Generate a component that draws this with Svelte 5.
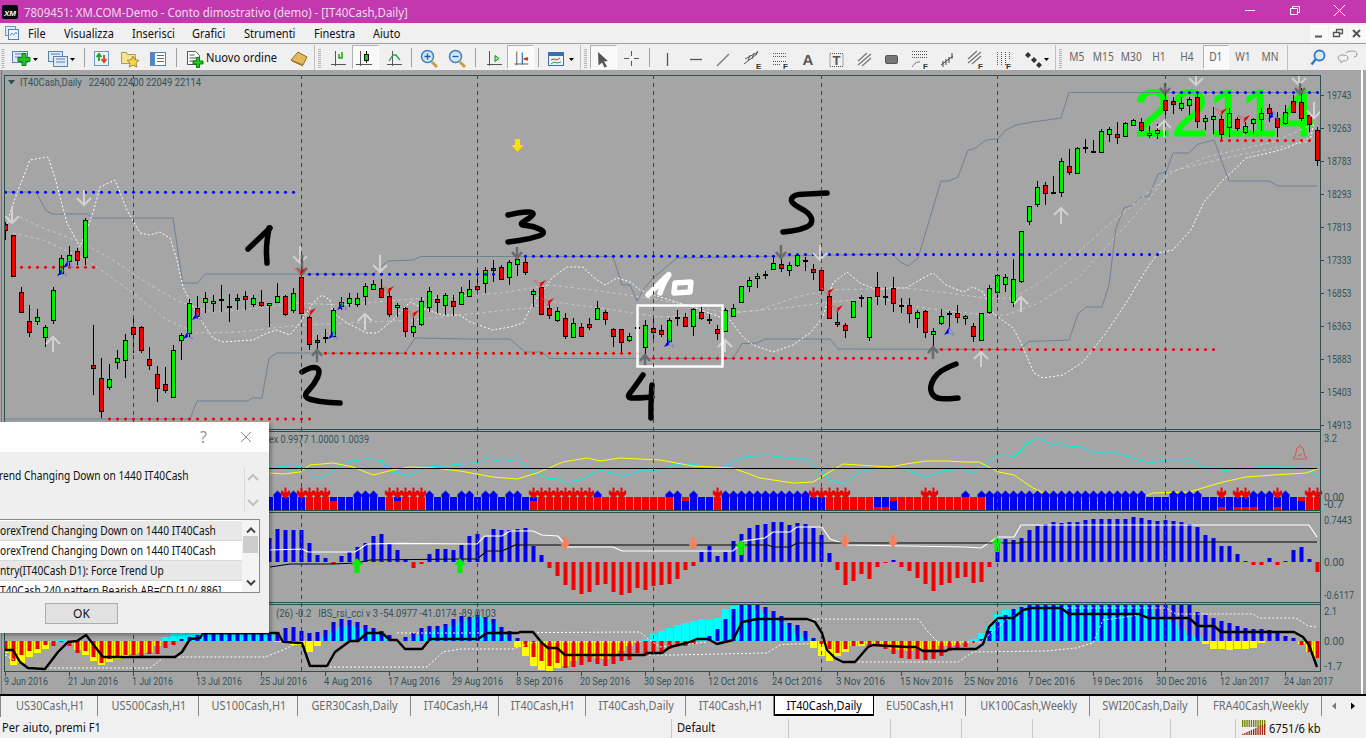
<script>
  const cx = i => 5.5 + 8 * i;

  // [colour, body top, body bottom, wick top, wick bottom], in 3x crop units per section
  const sec0 = [['r',132,150,125,180],['r',166,288,166,290],['r',337,397,322,398],['r',422,457,376,470],['g',412,424,387,435],['g',442,472,435,500],['g',331,421,320,432],['g',235,278,224,280],['g',226,244,198,262],['r',214,241,205,255],
    ['g',120,232,114,255],['r',556,565,435,645],['r',595,694,535,715],['g',598,622,552,630],['g',535,547,510,566],['g',481,541,462,594],['r',442,463,418,518],['r',442,511,437,518],['r',538,556,502,570],['r',583,625,558,666],
    ['r',613,631,560,640],['g',511,650,495,655],['g',466,481,460,540],['g',370,460,358,470],['r',385,409,348,418],['g',355,367,337,398],['g',362,370,345,395],['d',356,356,316,395],['d',377,377,342,425],['r',355,361,342,390],
    ['r',347,358,333,390],['g',355,373,345,380],['r',365,376,330,380],['g',370,376,370,440],['g',347,367,310,370],['r',347,403,345,408],['g',340,390,325,400],['r',292,400,260,402],['r',412,493,405,510],['r',481,487,466,508],
    ['d',470,470,448,490],['g',391,469,385,472],['g',367,379,350,390],['g',355,370,338,382],['g',355,373,338,382],['g',319,348,310,375],['g',313,328,300,330],['r',325,352,298,355],['r',349,403,325,410],['g',376,382,368,410],
    ['r',385,454,380,472],['g',439,457,415,470],['g',364,431,350,437],['g',334,382,320,395],['r',358,367,345,398],['g',346,376,340,405],['r',364,379,345,408]];
  const sec1 = [['g',367,403,350,405],['g',358,379,330,382],['r',349,358,290,375],['g',301,340,290,368],['r',295,301,270,335],['r',292,328,285,330],['g',277,322,270,345],['g',268,283,258,318],['r',277,307,262,315],['g',364,373,358,410],
    ['r',352,433,350,436],['r',415,436,392,448],['g',424,451,412,455],['r',445,498,430,508],['g',460,502,445,503],['r',472,499,458,502],['r',463,472,445,480],['g',415,448,393,450],['r',427,448,420,465],['r',478,499,475,530],
    ['r',478,517,478,550],['g',499,511,490,515],['d',470,470,460,480],['g',466,532,450,590],['r',475,487,448,512],['r',481,493,465,500],['g',451,514,445,520],['d',442,442,420,468],['r',442,469,428,472],['g',418,469,413,498],
    ['r',427,445,410,450],['d',448,448,432,462],['r',478,490,465,510],['g',421,484,415,487],['g',415,439,403,440],['g',349,397,349,398],['g',331,349,322,365],['g',319,325,310,355],['d',313,313,302,327],['g',280,298,262,300],
    ['r',283,295,250,305],['g',286,301,277,318],['g',256,286,253,290],['d',271,271,262,302],['r',298,307,283,330],['r',301,361,290,365],['r',379,445,360,448],['r',457,463,425,470],['r',466,481,460,505],['g',394,442,392,444],
    ['d',382,382,375,410],['g',382,502,380,512],['r',352,379,306,405],['d',377,377,352,405],['r',355,400,322,425],['d',404,404,385,430],['r',406,430,385,458],['g',427,445,420,475],['r',424,487,420,503],['g',484,493,475,565],
    ['g',439,460,418,464],['d',430,430,424,478],['r',430,442,405,458],['g',439,445,435,465],['r',469,499,460,515],['g',430,509,428,512],['g',355,427,345,432],['g',316,367,312,385],['g',322,343,312,367],['g',328,397,268,412],
    ['g',184,334,184,340],['g',109,154,109,166],['g',52,103,34,112],['r',46,70,36,104],['d',65,65,18,68]];
  const sec2 = [['g',484,577,475,590],['r',499,517,447,525],['g',445,518,440,520],['d',440,440,418,460],['d',452,452,420,460],['g',394,455,388,458],['g',388,403,380,425],['r',403,412,365,432],['g',370,409,365,410],['g',361,376,358,378],
    ['r',367,391,353,395],['g',400,406,378,413],['g',391,400,372,416],['r',301,331,280,345],['r',304,313,292,342],['g',310,325,290,332],['g',298,316,292,345],['r',292,364,280,385],['g',355,364,345,390],['g',349,358,320,402],
    ['r',358,403,345,420],['g',340,382,325,410],['r',358,385,352,392],['g',379,397,365,402],['g',358,370,355,402],['g',340,358,325,393],['r',325,340,312,365],['r',355,382,335,410],['g',337,370,315,375],['r',304,337,285,340],
    ['r',307,355,265,362],['r',346,373,340,395],['r',391,481,382,497]];
  const snap = v => Math.round(v) + 0.5;
  const toCandle = base => r => ({ c: r[0], t: snap(base + r[1] / 3), b: snap(base + r[2] / 3), h: Math.round(base + r[3] / 3), l: Math.round(base + r[4] / 3) });
  const candles = [...sec0.map(toCandle(180)), ...sec1.map(toCandle(170)), ...sec2.map(toCandle(0))].map((k, i) => ({ ...k, x: cx(i) }));

  const upper = "5,192 36,192 46,210.5 52,214 87,214 93,218 173,218 182,278 182,283 198,283 205,274 373,274 388,261 413,260 421,256.5 613,256.5 622,285 630,285 637,301 643,290 653,278 677,258 893,254 900,262 908,266 918,258 941,181 949,181 958,177 968,150 974,149 986,140 998,139 1006,130 1016,125 1033,122 1061,118 1069,92.5 1316,92.5";
  const lower = "5,419 190,419 197,401 248,401 252,398 262,398 269,358 277,353 405,353 415,338 468,339 510,339 525,352 542,352 550,358.5 733,358.5 742,343.5 757,343 765,339 830,339 838,349 1019,349.5 1029,341.5 1069,340 1078,314 1086,307 1102,307 1109,285 1116,228 1124,208 1133,205 1141,197 1149,196 1158,174 1166,172 1173,153 1189,153 1198,144 1214,140 1229,181 1269,181 1278,186 1317,186";
  const bollTop = "5,235 10,213 17,193 30,160 48,157 55,178 67,223 80,247 93,213 100,187 115,180 127,210 140,233 150,235 160,232 170,238 177,260 183,287 193,307 203,323 213,338 223,342 253,340 267,333 277,330 290,335 302,320 313,303 322,295 330,300 333,313 347,323 367,333 377,333 393,320 410,302 427,310 443,315 460,315 470,322 493,330 510,327 523,323 533,303 553,277 567,267 583,267 593,277 605,285 617,278 630,282 640,290 660,297 693,307 720,317 730,320 743,337 753,345 773,352 793,345 810,333 823,317 833,283 847,272 860,283 877,290 890,288 906,288 923,278 933,273 946,285 963,292 973,287 983,292 993,313 1013,328 1021,343 1034,373 1043,378 1063,375 1083,362 1106,333 1126,303 1146,270 1158,253 1173,250 1191,230 1204,202 1223,180 1234,170 1246,158 1259,155 1273,152 1289,147 1311,137 1314,122";
  const mid1 = "20,217 43,228 83,243 113,260 150,285 180,302 213,312 240,310 300,303 340,305 400,300 460,296 500,293 550,285 593,290 660,300 727,313 760,310 793,298 827,290 906,288 939,292 986,298 1013,298 1039,283 1073,257 1106,227 1139,200 1173,172 1206,157 1273,142 1316,123";
  const mid2 = "13,233 43,240 87,260 133,293 167,320 197,333 240,332 300,325 350,323 413,320 460,315 527,308 553,302 593,307 660,317 743,312 793,307 827,302 880,298 906,305 939,310 986,315 1006,315 1039,303 1079,277 1119,233 1146,203 1169,172 1196,165 1239,155 1316,140";

  const dots = (x0, x1, y, col) => { const o = []; for (let x = x0; x <= x1; x += 8) o.push({ x: x + 0.5, y, col }); return o; };
  const blue = '#0000f0', red = '#f00000';
  const levelDots = [...dots(5,293,192.3,blue),...dots(309,493,274.3,blue),...dots(525,773,256.3,blue),...dots(789,1157,254.5,blue),...dots(1165,1317,92.5,blue),
    ...dots(13,93,267.3,red),...dots(109,309,419,red),...dots(325,637,353.3,red),...dots(653,925,358.3,red),...dots(933,1213,349.5,red),...dots(1221,1309,140.5,red)];

  const lightDown = [[12,207,223],[84,190,205],[300,246,263],[380,255,272],[820,245,260],[1196,72,85],[1299,72,85],[1314,102,118]];
  const darkDown = [[302,255,274],[517,247,258],[781,245,258],[1165,83,94],[1300,83,94]];
  const lightUp = [[53,337,352],[365,314,330],[725,340,352],[1061,208,224],[1021,297,312],[981,352,367],[1164,121,137]];
  const darkUp = [[317,350,362],[645,355,365],[933,347,359]];
  const blueHeads = [[62,274],[68,266],[197,318],[188,337],[333,337],[342,308],[669,345],[949,333],[1273,117]];
  const redHeads = [[310,313],[388,291],[413,315],[300,273],[540,285],[548,303],[828,293],[837,310],[1221,113],[1244,120]];

  // hand-drawn annotations: point lists rounded into a pen stroke
  const smooth = s => {
    const p = s.split(' ').map(q => q.split(',').map(Number));
    let d = `M${p[0][0]} ${p[0][1]}`;
    for (let i = 1; i < p.length - 1; i++) d += `Q${p[i][0]} ${p[i][1]} ${(p[i][0] + p[i + 1][0]) / 2} ${(p[i][1] + p[i + 1][1]) / 2}`;
    const e = p[p.length - 1];
    return d + `L${e[0]} ${e[1]}`;
  };
  const inks = [
    "248,249 270,228",
    "269,228 266,245 267,263",
    "302,372 312,366 321,370 314,385 302,397 320,402 340,403",
    "508,215 520,212 535,212 530,218 518,225 534,226 547,233 530,239 508,242",
    "643,375 634,388 626,398 640,398 652,397",
    "652,385 651,400 651,418",
    "827,193 805,194 793,195 790,203 810,213 813,224 800,230 783,232",
    "956,364 939,370 929,387 934,398 947,399 958,398"
  ].map(smooth);

  const barKind = {}, marks = {};
  const fill = (t, a, b, m) => { for (let i = a; i <= b; i++) t[i] = m; };
  [[34,34,'^'],[35,35,'v'],[36,36,'^'],[37,40,'v'],[44,46,'^'],[48,52,'v'],[53,53,'^'],[55,55,'^'],[57,58,'^'],[60,61,'^'],[63,64,'^'],[66,73,'v'],[74,74,'^'],[76,77,'v'],[83,84,'^'],[86,86,'^'],[89,89,'v'],[90,100,'^'],[101,105,'v'],[115,116,'v'],[120,120,'^'],[122,142,'^'],[146,149,'^'],[152,152,'v'],[154,155,'v'],[156,158,'^'],[159,159,'v'],[160,160,'^'],[163,164,'v']].forEach(r => fill(marks, ...r));
  [[33,37,'b'],[38,40,'r'],[41,41,'t'],[42,47,'b'],[48,48,'r'],[49,49,'t'],[50,52,'r'],[53,65,'b'],[66,66,'t'],[67,83,'r'],[84,84,'b'],[85,85,'u'],[86,88,'b'],[89,89,'r'],[90,102,'b'],[103,108,'r'],[109,110,'m'],[111,111,'u'],[112,122,'r'],[123,151,'b'],[152,152,'m'],[153,153,'b'],[154,156,'m'],[157,158,'b'],[159,159,'m'],[160,161,'b'],[162,162,'u'],[163,164,'r']].forEach(r => fill(barKind, ...r));
  const pane2 = []; for (let i = 33; i <= 164; i++) pane2.push({ x: cx(i), k: barKind[i], m: marks[i] });

  const cyan = "270,465 283,467 293,465 303,468 312,477 323,478 333,470 347,462 367,459 380,460 392,472 410,476 427,467 445,466 460,464 477,463 487,459 495,460 502,462 518,459 533,472 547,478 558,479 567,482 580,480 600,470 623,476 643,470 660,470 673,465 693,464 717,470 733,463 743,457 767,455 793,459 807,459 820,470 830,480 843,484 863,470 893,469 906,470 926,477 943,471 963,469 973,473 983,467 996,456 1006,455 1014,457 1029,442 1038,438 1053,445 1061,443 1069,447 1079,446 1094,452 1109,452 1126,456 1149,463 1166,460 1189,459 1203,467 1219,468 1223,471 1234,469 1259,467 1289,467 1306,468 1317,477";
  const yellow = "270,473 283,474 300,472 310,465 333,463 353,467 373,475 393,470 410,467 433,468 460,471 493,477 517,479 537,473 563,462 587,458 600,461 620,458 660,460 693,466 733,468 760,478 793,483 813,482 843,464 890,467 906,464 926,461 946,461 966,462 979,462 999,472 1014,475 1033,488 1059,500 1083,503 1109,503 1136,500 1153,493 1189,492 1223,482 1246,477 1273,475 1306,473 1317,469";

  const osc = [24,33,32,32,32,19,7,4,-2,6,10,15,19,26,28,19,12,3,-6,-2,8,13,13,12,17,26,28,25,33,32,32,33,34,16,7,-6,-14,-23,-28,-32,-30,-23,-22,-30,-33,-31,-26,-28,-24,-23,-22,-17,-8,-4,10,16,6,10,21,28,34,37,38,40,40,37,39,38,34,27,9,-8,-23,-19,-12,-17,-5,-1,2,-5,-9,-16,-22,-29,-23,-21,-16,-15,-21,-20,-5,20,23,22,24,32,36,38,40,39,40,40,42,43,43,43,43,43,45,44,42,41,42,41,40,38,35,27,24,16,16,8,1,-3,-3,4,-3,1,12,15,3,-10]
    .map((v, k) => ({ x: cx(33 + k), v }));
  const oscWhite = "270,550 302,549 308,552 355,552 367,544 400,543.3 477,544 485,536 502,536 510,531 533,531 542,535 558,536 567,547 613,547 622,551 733,551 743,541 765,538 773,532 790,532 797,527 822,527 830,539 848,545 966,547 981,548 998,537 1014,537 1021,525 1309,525 1317,537";
  const oscBlack = "270,567 290,564 333,564 357,563 370,560 460,559 477,559 487,551 502,551 515,545 768,545 773,547 790,547 797,543 1019,543 1021,542 1317,542";
  const greenUps = [[357,558],[460,558],[741,540],[997,537]];
  const orangeDowns = [[565,537],[693,537],[845,535],[893,535]];

  const wideV = [-12,-24,-22,-16,-12,-8,-1,1,-3,-9,-14,-20,-24,-21,-18,-15,-13,-12,-11,-5,4,8,8,8,10,10,10,10,10,10,10,10,10,10,-1,-3,-4,-4,-11,-5,4,10,14,16,14,12,10,6,2,0,0,3,6,10,12,14,16,20,22,25,22,18,9,2,-6,-15,-25,-29,-30,-27,-25,-20,-16,-14,-17,-18,-15,-10,-5,-1,2,7,10,13,16,18,20,22,21,23,32,35,36,36,32,28,24,19,16,8,4,-7,-15,-20,-15,-11,-5,-5,-3,-4,-5,-8,-9,-10,-8,-8,-8,-5,-5,-4,-1,2,8,15,27,31,32,34,37,37,37,37,37,37,37,37,37,37,37,37,37,37,37,37,25,21,19,12,6,4,-3,-8,-8,-9,-8,-8,-7,-2,0,0,0,0,-3,-11,-17,-17];
  const thinV = [-10,-20,-14,-10,-8,-4,-5,-1,-5,-12,-10,-16,-22,-18,-15,-14,-14,-15,-13,-13,-7,-4,2,4,6,7,7,7,8,8,8,8,8,8,9,13,14,10,8,9,11,19,22,21,19,16,13,10,6,0,4,8,13,15,15,17,22,25,24,26,24,22,14,10,3,-6,-16,-20,-25,-22,-27,-26,-24,-21,-23,-25,-23,-20,-19,-12,-15,-13,-11,-8,-4,-5,-3,0,5,12,22,32,36,36,36,34,30,25,18,16,10,3,-3,-8,-12,-8,-5,-3,-6,-4,-8,-13,-17,-18,-18,-19,-18,-15,-10,-8,-6,-2,2,10,19,26,32,34,37,37,37,37,37,37,37,37,37,37,37,37,37,37,37,37,37,37,37,37,37,29,26,23,20,18,15,13,12,12,11,9,5,3,-4,-11,-17,-19];
  const ibs = wideV.map((c, i) => ({ x: cx(i), c, t: thinV[i] ?? 0 }));
  const ibsBlack = "5,650 13,650 20,662 28,668 45,669 58,652 68,642 77,641 86,635 103,657 175,657 182,652 190,639 200,638 203,633 278,633 283,642 302,643 310,666 327,666 335,652 350,641 358,641 367,633 382,633 390,640 397,640 405,649 422,649 430,639 478,639 487,633 518,633 520,632 533,632 542,643 548,648 557,648 565,655 645,655 647,653 662,653 670,647 687,643 697,639 708,639 717,644 733,640 742,622 757,619 807,619 815,622 822,633 827,650 835,658 843,662 855,662 868,647 873,645 907,647 916,647 923,651 946,651 949,649 976,649 983,644 989,627 998,618 1013,618 1023,610 1031,608 1061,608 1069,614 1139,614 1148,618 1189,618 1198,626 1214,626 1221,632 1294,632 1303,637 1309,645 1317,667";
  const ibsDots = [
    "5,655 30,668 150,668 163,658 177,657 265,657 283,650 300,642",
    "310,667 427,667 443,652 460,649 513,649 530,643 540,642 640,642",
    "565,655 673,655 767,653 780,645 793,644 815,644 842,661 857,662 958,662 973,652 1046,651 1076,648 1093,643 1103,620 1119,618 1139,615",
    "397,633 460,633 640,632 647,638 660,647 707,642",
    "813,619 918,619 929,633 938,642 981,642 1006,620 1029,608 1166,608 1176,614 1253,614 1259,618 1296,618 1308,626 1317,627"
  ];

  const seps = [133.5, 301.5, 477.5, 653.5, 821.5, 997.5, 1165.5];
  const prices = [[19743,95],[19263,128],[18783,161],[18293,194],[17813,227],[17333,260],[16853,293],[16363,326],[15883,359],[15403,392],[14913,425]];
  const paneLabels = [['3.2',438,13],['0.00',497,20],['-0.7',504,19],['0.7443',520,28],['0.00',562,20],['-0.6117',595,30],['2.1',611,13],['0.00',641,20],['-1.7',666,18]];
  const dates = [['9 Jun 2016',44],['21 Jun 2016',50],['1 Jul 2016',41],['13 Jul 2016',46],['25 Jul 2016',47],['4 Aug 2016',48],['17 Aug 2016',52],['29 Aug 2016',51],['8 Sep 2016',47],['20 Sep 2016',50],['30 Sep 2016',50],['12 Oct 2016',50],['24 Oct 2016',50],['3 Nov 2016',49],['15 Nov 2016',53],['25 Nov 2016',54],['7 Dec 2016',47],['19 Dec 2016',51],['30 Dec 2016',51],['12 Jan 2017',49],['24 Jan 2017',49]];

  const tabs = [['US30Cash,H1',96],['US500Cash,H1',101],['US100Cash,H1',99],['GER30Cash,Daily',113],['IT40Cash,H4',88],['IT40Cash,H1',87],['IT40Cash,Daily',100],['IT40Cash,H1',88],['IT40Cash,Daily',100,true],['EU50Cash,H1',92],['UK100Cash,Weekly',124],['SWI20Cash,Daily',108],['FRA40Cash,Weekly',124]];
  const menu = [['File',36],['Visualizza',68],['Inserisci',60],['Grafici',52],['Strumenti',70],['Finestra',59],['Aiuto',40]];
  const periods = [['M5',24],['M15',28],['M30',28],['H1',28],['H4',28]];
  const periods2 = [['W1',28],['MN',26]];
  const statusCells = [['Per aiuto, premi F1',672],['Default',117],['',102],['',71],['',71],['',67],['',71],['',65]];
  const statusBars = Array.from({ length: 11 }, (_, k) => k);
</script>

<div class="app">
  <header class="title">
    <svg class="logo" viewBox="0 0 20 20" width="20" height="20"><rect x="2" y="3" width="16" height="14" rx="2" fill="#0a0a0a"/><text x="10" y="13.5" text-anchor="middle" class="logotext">XM</text></svg>
    <span class="titletext">7809451: XM.COM-Demo - Conto dimostrativo (demo) - [IT40Cash,Daily]</span>
    <div class="winbtns">
      <svg viewBox="0 0 134 23" width="134" height="23"><path d="M13 10.5h10" stroke="#fff" fill="none"/><path d="M58.5 8.5h7v6h-7zM60.5 8.5v-2h7v6h-2" stroke="#fff" fill="none"/><path d="M102 5l11 11M113 5l-11 11" stroke="#fff" fill="none"/></svg>
    </div>
  </header>

  <nav class="menu">
    <svg class="menuicon" viewBox="0 0 16 16" width="16" height="16"><rect x="1.5" y="1.5" width="10" height="9" fill="#dcecf8" stroke="#6b9ac8"/><rect x="4.5" y="4.5" width="10" height="10" fill="#eef5fb" stroke="#5a7fa8"/><path d="M6 11l2-3 2 2 2-3 1 2" stroke="#6b9ac8" fill="none"/></svg>
    {#each menu as m}<span class="menuitem" style="width:{m[1]}px"><span class="mt">{m[0]}</span></span>{/each}
    <div class="mdibtns">
      <span class="mdi"><svg viewBox="0 0 18 17" width="18" height="17"><path d="M5 11.5h7" stroke="#555" stroke-width="2"/></svg></span>
      <span class="mdi"><svg viewBox="0 0 18 17" width="18" height="17"><path d="M4.5 7.5h6v4h-6zM7.5 7V4.5h6v4h-3" fill="none" stroke="#555" stroke-width="1.3"/></svg></span>
      <span class="mdi"><svg viewBox="0 0 18 17" width="18" height="17"><path d="M5 5l7 7M12 5l-7 7" stroke="#555" stroke-width="2"/></svg></span>
    </div>
  </nav>

  <div class="toolbar">
    <svg viewBox="0 43 10 27" width="10" height="27"><path d="M3 48v19" stroke="#b4b4b4" stroke-width="3" stroke-dasharray="1 1"/></svg>
    <svg viewBox="10 43 36 27" width="36" height="27">
      <rect x="12.5" y="50.5" width="15" height="11" fill="#dfeaf6" stroke="#5b82ad"/><path d="M15 53h9M15 56h6" stroke="#5b82ad"/>
      <path d="M20 52.500h4v4h4v4h-4v4h-4v-4h-4v-4h4z" transform="translate(2 0)" fill="#21c421" stroke="#0b7d0b"/>
      <path d="M33 57h5l-2.500 3z" fill="#000"/></svg>
    <svg viewBox="46 43 36 27" width="36" height="27">
      <rect x="48.5" y="50.500" width="14" height="10" fill="#dfeaf6" stroke="#5b82ad"/><rect x="53.500" y="55.500" width="14" height="10" fill="#dfeaf6" stroke="#5b82ad"/><path d="M51 53h9M56 58h9M56 61h9" stroke="#5b82ad"/>
      <path d="M70 57h5l-2.500 3z" fill="#000"/></svg>
    <svg viewBox="82 43 8 27" width="8" height="27"><path d="M84.500 47v19" stroke="#a0a0a0"/></svg>
    <svg viewBox="90 43 26 27" width="26" height="27">
      <rect x="94.500" y="50.500" width="14" height="14" fill="#eaf3fb" stroke="#6f97bf"/><path d="M99 60v-6M96.500 56l2.500-3 2.500 3" fill="none" stroke="#1aa51a" stroke-width="1.800"/><path d="M104 54v6M101.500 58l2.500 3 2.500-3" fill="none" stroke="#d8401a" stroke-width="1.800"/></svg>
    <svg viewBox="116 43 30 27" width="30" height="27">
      <path d="M121.500 51.500h5l1 2h8v9h-14z" fill="#f7e38d" stroke="#a89a5e"/><path d="M133 55l1.800 3.800 4.200.5-3 2.800.8 4-3.800-2-3.800 2 .8-4-3-2.800 4.200-.5z" fill="#f5d453" stroke="#a58b2a"/></svg>
    <svg viewBox="146 43 26 27" width="26" height="27">
      <rect x="150.500" y="51.500" width="15" height="13" fill="#fff" stroke="#5b82ad"/><rect x="151" y="52" width="4" height="12" fill="#4a8acc"/><path d="M157 54.500h7M157 57.500h7M157 60.500h7" stroke="#666"/></svg>
    <svg viewBox="172 43 12 27" width="12" height="27"><path d="M176.500 47v19" stroke="#a0a0a0"/></svg>
    <div class="order">
      <svg viewBox="184 43 22 27" width="22" height="27">
        <path d="M187.500 50.500h8l4 4v9h-12z" fill="#fff" stroke="#555"/><path d="M189.500 54h5M189.500 57h7M189.500 60h7" stroke="#555"/>
        <path d="M196.500 56.500h3v3.500h3.500v3h-3.500v3.500h-3v-3.500h-3.500v-3h3.500z" fill="#21c421" stroke="#0b7d0b"/></svg>
      <span class="ordertext">Nuovo ordine</span>
    </div>
    <svg viewBox="284 43 28 27" width="28" height="27"><path d="M291 59l7-8 9 5-4 8z" fill="#e5b957" stroke="#8e6c24"/><path d="M292 60l11 5" stroke="#8e6c24"/></svg>
    <svg viewBox="312 43 14 27" width="14" height="27"><path d="M314.500 44v26" stroke="#c0c0c0"/><path d="M319.500 48v19" stroke="#b4b4b4" stroke-width="3" stroke-dasharray="1 1"/></svg>

    <svg viewBox="326 43 26 27" width="26" height="27"><path d="M335.500 50v15M331 63.500h15" stroke="#555" fill="none"/><path d="M339 53v4h3v-6" fill="none" stroke="#19a319" stroke-width="1.500"/></svg>
    <span class="pressed"><svg viewBox="352 43 26 27" width="26" height="27"><path d="M360.500 50v15M356 63.500h16" stroke="#555" fill="none"/><path d="M366.500 50v12" stroke="#111"/><rect x="364.500" y="53.500" width="4" height="6" fill="#21c421" stroke="#111"/></svg></span>
    <svg viewBox="378 43 28 27" width="28" height="27"><path d="M391.500 50v15M386 63.500h15" stroke="#555" fill="none"/><path d="M388 60l4-6h3l4 5" fill="none" stroke="#2a9c55" stroke-width="1.300"/></svg>
    <svg viewBox="406 43 8 27" width="8" height="27"><path d="M410.500 47v19" stroke="#a0a0a0"/></svg>
    <svg viewBox="414 43 28 27" width="28" height="27"><path d="M431 61l5 5" stroke="#c9a13a" stroke-width="3"/><circle cx="426.500" cy="55.500" r="6" fill="#cfe4f6" stroke="#3d7fbf" stroke-width="1.500"/><path d="M423.500 55.500h6M426.500 52.500v6" stroke="#1f5fa6" stroke-width="1.300"/></svg>
    <svg viewBox="442 43 28 27" width="28" height="27"><path d="M459 61l5 5" stroke="#c9a13a" stroke-width="3"/><circle cx="454.500" cy="55.500" r="6" fill="#cfe4f6" stroke="#3d7fbf" stroke-width="1.500"/><path d="M451.500 55.500h6" stroke="#1f5fa6" stroke-width="1.300"/></svg>
    <svg viewBox="470 43 8 27" width="8" height="27"><path d="M474.500 47v19" stroke="#a0a0a0"/></svg>
    <svg viewBox="478 43 28 27" width="28" height="27"><path d="M488.500 50v15M486 63.500h15" stroke="#555" fill="none"/><path d="M494 54.500v6l4-3z" fill="#9ee89e" stroke="#0f8f0f"/></svg>
    <span class="pressed"><svg viewBox="506 43 28 27" width="26" height="27"><path d="M516.500 50v15M514 63.500h15" stroke="#555" fill="none"/><path d="M522.500 51v13" stroke="#2f6fb4" stroke-width="1.300"/><path d="M528 56.500l-4 1.500 4 1.500z M524 58h5" fill="#c83a10" stroke="#c83a10"/></svg></span>
    <svg viewBox="534 43 10 27" width="10" height="27"><path d="M538.500 47v19" stroke="#a0a0a0"/></svg>
    <svg viewBox="544 43 34 27" width="34" height="27"><rect x="548.500" y="51.500" width="15" height="13" fill="#eef4fb" stroke="#3a70a8"/><rect x="549" y="52" width="14" height="3" fill="#3a70a8"/><path d="M551 59l3-1 3 1 3-2" stroke="#b7411b" fill="none"/><path d="M551 63l3-2 3 1 4-1" stroke="#1b9a3c" fill="none"/><path d="M569 57h5l-2.500 3z" fill="#000"/></svg>
    <svg viewBox="578 43 12 27" width="12" height="27"><path d="M580.500 44v26" stroke="#c0c0c0"/><path d="M585.500 48v19" stroke="#b4b4b4" stroke-width="3" stroke-dasharray="1 1"/></svg>

    <span class="pressed"><svg viewBox="590 43 26 27" width="26" height="27"><path d="M598 51l10 9-4 .5 3 5-2.500 1-2.500-5-3.500 3z" fill="#555"/></svg></span>
    <svg viewBox="616 43 28 27" width="28" height="27"><path d="M630.500 50v5M630.500 60v5M623 57.500h5M633 57.500h5" stroke="#555"/></svg>
    <svg viewBox="644 43 8 27" width="8" height="27"><path d="M648.500 47v19" stroke="#a0a0a0"/></svg>
    <svg viewBox="652 43 28 27" width="28" height="27"><path d="M666.500 52v13" stroke="#555" stroke-width="1.300"/></svg>
    <svg viewBox="680 43 28 27" width="28" height="27"><path d="M689 58.500h12" stroke="#555" stroke-width="1.300"/></svg>
    <svg viewBox="708 43 28 27" width="28" height="27"><path d="M716 65l12-12" stroke="#777" stroke-width="1.300"/></svg>
    <svg viewBox="736 43 28 27" width="28" height="27"><path d="M743 63l13-10M744 58l13-7M747 60l2-6M751 58l2-6M755 54l2-4" stroke="#555" fill="none"/><text x="755" y="68" class="ti">E</text></svg>
    <svg viewBox="764 43 28 27" width="28" height="27"><path d="M772 52.500h13M772 55.500h13M772 60.500h13M772 63.500h8" stroke="#555" stroke-dasharray="1 1"/><text x="782" y="68" class="ti">F</text></svg>
    <svg viewBox="792 43 28 27" width="28" height="27"><text x="807" y="64" text-anchor="middle" class="ta">A</text></svg>
    <svg viewBox="820 43 30 27" width="30" height="27"><rect x="829" y="52.500" width="13" height="13" fill="none" stroke="#555" stroke-dasharray="1 1"/><text x="835.500" y="64" text-anchor="middle" class="ta t2">T</text></svg>
    <svg viewBox="850 43 28 27" width="28" height="27"><path d="M857 60l9-8M857 64l13-11M861 65l9-8" stroke="#777" stroke-width="1.300"/></svg>
    <svg viewBox="878 43 26 27" width="26" height="27"><rect x="884.500" y="54.500" width="12" height="8" rx="1.500" fill="#777" stroke="#555"/></svg>
    <svg viewBox="904 43 28 27" width="28" height="27"><path d="M911 50.500h15M911 53.500h15M911 56.500h15" stroke="#555" stroke-dasharray="1 1"/><path d="M911 66q4-6 8-5" stroke="#777" fill="none"/><text x="922" y="68" class="ti">F</text></svg>
    <svg viewBox="932 43 28 27" width="28" height="27"><path d="M940 64l12-9M942 60v6M945 58v6M948 56v6M951 52v6" stroke="#444" fill="none"/></svg>
    <svg viewBox="960 43 28 27" width="28" height="27"><path d="M967 58l9-8M967 62l13-11M971 63l9-8" stroke="#777" stroke-width="1.300"/><text x="977" y="68" class="ti">F</text></svg>
    <svg viewBox="988 43 28 27" width="28" height="27"><path d="M996.500 51v13M1000.500 51v13M1004.500 51v13M1008.500 51v8" stroke="#555" stroke-dasharray="1 1"/><text x="1005" y="68" class="ti">F</text></svg>
    <svg viewBox="1016 43 36 27" width="36" height="27"><path d="M1027 51l3 3-3 3-3-3zM1033 56l3 3-3 3-3-3zM1038 61l3 3-3 3-3-3z" fill="#333"/><path d="M1043 57h5l-2.500 3z" fill="#000"/></svg>
    <svg viewBox="1052 43 12 27" width="12" height="27"><path d="M1054.500 44v26" stroke="#c0c0c0"/><path d="M1059.500 48v19" stroke="#b4b4b4" stroke-width="3" stroke-dasharray="1 1"/></svg>
    {#each periods as p}<span class="period" style="width:{p[1]}px"><span class="pt">{p[0]}</span></span>{/each}
    <span class="pressed period dgap"><span class="pt">D1</span></span>
    {#each periods2 as p}<span class="period" style="width:{p[1]}px"><span class="pt">{p[0]}</span></span>{/each}
    <svg viewBox="1284 43 82 27" width="82" height="27"><path d="M1288.500 44v26" stroke="#c0c0c0"/><circle cx="1320.500" cy="54.500" r="5" fill="#dbe9f7" stroke="#2f79c6" stroke-width="1.800"/><path d="M1316.500 58.500l-4 5" stroke="#2f79c6" stroke-width="2.500"/><path d="M1342 60q-3-1-3-3 0-3 5-3 5 0 5 3 0 3-5 3l-2 2zM1347 52q1-2 5-2 6 0 6 3 0 3-3 3" fill="#f0f0f0" stroke="#9a9a9a"/></svg>
  </div>

  <main class="chartwrap">
    <svg class="chart" viewBox="0 70 1366 624" width="1366" height="624">
      <defs>
        <clipPath id="p4"><rect x="5" y="604.500" width="1315" height="67"/></clipPath>
        <clipPath id="p1"><rect x="5" y="75.500" width="1315" height="353"/></clipPath>
      </defs>
      <rect x="0" y="70" width="1366" height="624" fill="#a5a5a5"/>
      <rect x="1361" y="70" width="2" height="624" fill="#fff"/>
      <path d="M1.500 70v624" stroke="#777"/>

      <text x="1134" y="136" class="bigprice" textLength="181" lengthAdjust="spacingAndGlyphs">22114</text>

      <g clip-path="url(#p1)">
        <polyline class="channel" points={upper}/>
        <polyline class="channel" points={lower}/>
        <polyline class="boll" points={bollTop}/>
        <polyline class="midl" points={mid1}/>
        <polyline class="midl" points={mid2}/>

        {#each candles as k}
          <path d="M{k.x} {k.h}V{k.l}" stroke="#000" shape-rendering="crispEdges"/>
          {#if k.c === 'd'}
            <path d="M{k.x - 2.5} {k.t}h5" stroke="#000" stroke-width="2" shape-rendering="crispEdges"/>
          {:else}
            <rect x={k.x - 2} y={k.t} width="4" height={Math.max(k.b - k.t, 1)} fill={k.c === 'g' ? '#00f000' : '#f00000'} stroke="#000" shape-rendering="crispEdges"/>
          {/if}
        {/each}

        {#each levelDots as d}<circle cx={d.x} cy={d.y} r="1.500" fill={d.col}/>{/each}

        {#each lightDown as [x, t, b]}<path class="ar light" d="M{x} {t}V{b}M{x - 7} {b - 7}L{x} {b}L{x + 7} {b - 7}"/>{/each}
        {#each lightUp as [x, t, b]}<path class="ar light" d="M{x} {b}V{t}M{x - 7} {t + 7}L{x} {t}L{x + 7} {t + 7}"/>{/each}
        {#each darkDown as [x, t, b]}<path class="ar dark" d="M{x} {t}V{b}M{x - 5} {b - 6}L{x} {b}L{x + 5} {b - 6}"/>{/each}
        {#each darkUp as [x, t, b]}<path class="ar dark" d="M{x} {b}V{t}M{x - 5} {t + 6}L{x} {t}L{x + 5} {t + 6}"/>{/each}
        {#each blueHeads as [x, y]}<path d="M{x} {y - 6}L{x - 5} {y + 2}L{x} {y}z" fill="#0000e0"/><path d="M{x} {y - 6}L{x + 5} {y + 2}L{x} {y}z" fill="none" stroke="#6a78d8" stroke-width=".7"/>{/each}
        {#each redHeads as [x, y]}<path d="M{x + 6} {y - 5}L{x} {y + 3}L{x} {y - 2}z" fill="#e80000"/><path d="M{x - 6} {y - 5}L{x} {y + 3}L{x} {y - 2}z" fill="none" stroke="#d06060" stroke-width=".7"/>{/each}

        <path d="M515 139h5v6h3.500l-6 7-6-7h3.500z" fill="#ffe000"/>

        {#each inks as d}<path class="ink" d={d}/>{/each}
        <path class="chalk" d={smooth("648,295 660,283 671,272 664,282 660,293")}/>
        <polygon class="chalk" points="675,283 691,282 690,292 674,293"/>
        <rect x="637.500" y="305.500" width="85" height="61" fill="none" stroke="#fff" stroke-width="2.500"/>
      </g>

      <!-- pane 2 -->
      <polyline class="ind cy" points={cyan}/>
      <polyline class="ind ye" points={yellow}/>
      <path d="M269 468.500H1317" stroke="#000" stroke-width="1.200"/>
      {#each pane2 as b}
        <rect x={b.x - 3.500} y="497" width="7" height="13" fill={b.k === 'r' ? '#f00000' : '#0000f0'}/>
        {#if b.k === 't'}<rect x={b.x - 3.500} y="501" width="7" height="9" fill="#f00000"/>{/if}
        {#if b.k === 'u'}<rect x={b.x - 3.500} y="497" width="7" height="4" fill="#f00000"/>{/if}
        {#if b.k === 'm'}<rect x={b.x - 3.500} y="507" width="7" height="3" fill="#f00000"/>{/if}
        {#if b.m === '^'}<path d="M{b.x - 4} 497v-2.500l4-4 4 4v2.500z" fill="#0000f0"/>{/if}
      {/each}
      {#each pane2 as b}
        {#if b.m === 'v'}<path d="M{b.x - 1} 487.500h2v5l3-2.500 1 3.500-5 5.500-5-5.500 1-3.500 3 2.500z" fill="#f00000"/>{/if}
      {/each}
      <path d="M1294 457q2-1 2-5 0-5 4-6 4 1 4 6 0 4 2 5 2 1 0 2h-12q-2-1 0-2zM1298 456l4-2M1300 445v-1" fill="none" stroke="#e0504a"/>

      <!-- pane 3 -->
      {#each osc as o}
        <rect x={o.x - 2} y={o.v > 0 ? 562 - o.v : 562} width="4" height={Math.abs(o.v)} fill={o.v > 0 ? '#0000f0' : '#f00000'}/>
      {/each}
      <polyline class="ind wh" points={oscWhite}/>
      <polyline class="ind bk" points={oscBlack}/>
      {#each greenUps as [x, y]}<path d="M{x} {y}l6 7h-3.500v8h-5v-8h-3.500z" fill="#00f000"/>{/each}
      {#each orangeDowns as [x, y]}<path d="M{x - 2} {y}h4v6l4-1-6 8-6-8 4 1z" fill="#f5805a"/>{/each}

      <!-- pane 4 -->
      <g clip-path="url(#p4)">
        {#each ibs as b}
          <rect x={b.x - 3.500} y={b.c > 0 ? 641 - b.c : 641} width="7" height={Math.abs(b.c)} fill={b.c > 0 ? '#00ffff' : '#ffff00'}/>
          <rect x={b.x - 2} y={b.t > 0 ? 641 - b.t : 641} width="4" height={Math.abs(b.t)} fill={b.t > 0 ? '#0000f0' : '#f00000'}/>
        {/each}
        {#each ibsDots as d}<polyline class="boll" points={d}/>{/each}
        <polyline class="ibsline" points={ibsBlack}/>
      </g>

      <!-- frames -->
      {#each seps as x}<path d="M{x} 75V672" stroke="#2c4c4c" stroke-dasharray="4 4"/>{/each}
      <path class="fr" d="M4.500 75V672M1320.500 75V672M4.500 75.500H1320M4.500 429.500H1320M4.500 431.500H1320M4.500 510.500H1320M4.500 512.500H1320M4.500 602.500H1320M4.500 604.500H1320M4.500 671.500H1320"/>

      <path d="M8 80h7l-3.500 4.500z" fill="#2e5050"/>
      <text x="20" y="86" class="lab pre" textLength="181" lengthAdjust="spacingAndGlyphs">IT40Cash,Daily   22400 22400 22049 22114</text>
      <text x="269" y="443" class="lab" textLength="100" lengthAdjust="spacingAndGlyphs">ex 0.9977 1.0000 1.0039</text>
      <text x="276" y="617" class="lab pre" textLength="220" lengthAdjust="spacingAndGlyphs">(26) -0.2   IBS_rsi_cci v 3 -54.0977 -41.0174 -89.0103</text>

      {#each prices as [p, y]}
        <path class="fr" d="M1320 {y + 0.500}h4"/>
        <text x="1327" y={y + 4} class="lab" textLength="24.500" lengthAdjust="spacingAndGlyphs">{p}</text>
      {/each}
      {#each paneLabels as [t, y, w]}
        <text x="1324" y={y + 4} class="lab" textLength={w} lengthAdjust="spacingAndGlyphs">{t}</text>
      {/each}
      {#each dates as [t, w], i}
        <path class="fr" d="M{5.500 + 64 * i} 672v4"/>
        <text x={4 + 64 * i} y="685" class="lab" textLength={w} lengthAdjust="spacingAndGlyphs">{t}</text>
      {/each}
    </svg>

    <section class="dialog">
      <div class="dhead">
        <span class="q">?</span>
        <svg viewBox="0 0 12 12" width="12" height="12"><path d="M1 1l10 10M11 1L1 11" stroke="#8a8a8a" fill="none"/></svg>
      </div>
      <div class="dmsg">
        <span class="nt">rend Changing Down on 1440 IT40Cash</span>
        <div class="mscroll">
          <svg viewBox="0 0 12 8" width="12" height="8"><path d="M1 7l5-5 5 5" stroke="#c0c0c0" stroke-width="2" fill="none"/></svg>
          <svg viewBox="0 0 12 8" width="12" height="8"><path d="M1 1l5 5 5-5" stroke="#c0c0c0" stroke-width="2" fill="none"/></svg>
        </div>
      </div>
      <div class="dlist">
        <div class="rows">
          <div class="row alt"><span class="nt">orexTrend Changing Down on 1440 IT40Cash</span></div>
          <div class="row"><span class="nt">orexTrend Changing Down on 1440 IT40Cash</span></div>
          <div class="row alt"><span class="nt">ntry(IT40Cash D1): Force Trend Up</span></div>
          <div class="row"><span class="nt">T40Cash 240 pattern Bearish AB=CD [1.0/.886]</span></div>
        </div>
        <div class="lscroll">
          <svg viewBox="0 0 12 8" width="12" height="8"><path d="M2 6.500l4-4 4 4" stroke="#444" stroke-width="2" fill="none"/></svg>
          <span class="thumb"></span>
          <svg viewBox="0 0 12 8" width="12" height="8"><path d="M2 1.500l4 4 4-4" stroke="#444" stroke-width="2" fill="none"/></svg>
        </div>
      </div>
      <button class="ok">OK</button>
    </section>
  </main>

  <div class="tabs">
    {#each tabs as t}
      <span class="tab" class:active={t[2]} style="width:{t[1]}px"><span class="tt">{t[0]}</span></span>
    {/each}
    <svg class="tabarrows" viewBox="0 0 30 12" width="30" height="12"><path d="M5 2.500L1 6l4 3.500z" fill="#777"/><path d="M20 2.500L24 6l-4 3.500z" fill="#000"/></svg>
  </div>

  <footer class="status">
    {#each statusCells as c}<span class="cell" style="width:{c[1]}px"><span class="st">{c[0]}</span></span>{/each}
    <svg class="stbars" viewBox="0 0 24 18" width="24" height="18">
      {#each statusBars as k}
        <rect x={k * 2.2} y="1" width="1.300" height="7" fill="#6f7f00"/>
        <rect x={k * 2.200} y={15 - k} width="1.300" height={k + 1} fill="#a02a10"/>
      {/each}
    </svg>
    <span class="mem"><span class="st">6751/6 kb</span></span>
  </footer>
</div>

<style>
  :global(body) { margin: 0; background: #f0f0f0; }
  .app { width: 1366px; height: 738px; display: flex; flex-direction: column; overflow: hidden; font-family: "Noto Sans", "Liberation Sans", sans-serif; font-size: 12px; }
  .title { height: 23px; background: #c338ae; display: flex; align-items: center; position: relative; flex: none; }
  .logo { margin-left: 0; flex: none; }
  .logotext { font: italic bold 8px "Liberation Sans", sans-serif; fill: #fff; }
  .titletext { margin-left: 4px; color: #f3d9ee; font-size: 13px; white-space: nowrap; transform: scaleX(.88); transform-origin: left; }
  .winbtns { margin-left: auto; height: 23px; margin-right: 0; line-height: 0; }

  .menu { height: 20px; background: #f0f0f0; display: flex; align-items: center; flex: none; border-bottom: 1px solid #a0a0a0; }
  .menuicon { margin: 0 8px 0 4px; flex: none; }
  .menuitem { color: #111; font-size: 12.500px; flex: none; }
  .mt { display: inline-block; transform: scaleX(.88); transform-origin: left; white-space: nowrap; }
  .mdibtns { margin-left: auto; display: flex; gap: 1px; padding-top: 1px; }
  .mdi { width: 18px; height: 17px; background: #f9f9f9; line-height: 0; }

  .toolbar { height: 26px; background: #f0f0f0; display: flex; align-items: flex-start; flex: none; }
  .toolbar svg { flex: none; display: block; }
  .order { display: flex; width: 100px; height: 27px; align-items: center; }
  .ordertext { color: #111; font-size: 12.500px; white-space: nowrap; transform: scaleX(.89); transform-origin: left; margin-top: -1px; }
  .pressed { background: #f9f9f9; border: 1px solid #b0b0b0; border-right-color: #fff; border-bottom-color: #fff; box-sizing: border-box; height: 24px; margin-top: 1px; overflow: hidden; display: block; }
  .pressed svg { margin: -2px 0 0 -1px; }
  .period { height: 27px; line-height: 26px; text-align: center; color: #666; font-size: 12px; flex: none; }
  .pt { display: inline-block; transform: scaleX(.85); }
  .dgap { width: 26px; margin-left: 2px; height: 24px; line-height: 22px; }

  .chartwrap { height: 624px; position: relative; flex: none; line-height: 0; }
  .chart { display: block; }
  .bigprice { font: 67px "Liberation Sans", sans-serif; fill: #00ff00; stroke: #00ff00; stroke-width: 1; }
  .channel { fill: none; stroke: #6f8296; stroke-width: 1; }
  .boll { fill: none; stroke: #fff; stroke-width: 1; stroke-dasharray: 2 2; }
  .midl { fill: none; stroke: #c8c8c8; stroke-width: 1; stroke-dasharray: 3 3; }
  .ar { fill: none; stroke-linecap: butt; }
  .light { stroke: #d2d2d2; stroke-width: 2; }
  .dark { stroke: #6b6b6b; stroke-width: 2.500; }
  .ink { fill: none; stroke: #000; stroke-width: 5.500; stroke-linecap: round; stroke-linejoin: round; }
  .chalk { fill: none; stroke: #fff; stroke-width: 5.500; stroke-linecap: round; stroke-linejoin: round; }
  .ind { fill: none; stroke-width: 1; }
  .cy { stroke: #00f0f0; }
  .ye { stroke: #ffff00; }
  .wh { stroke: #fff; stroke-width: 1.200; }
  .bk { stroke: #000; stroke-width: 1.200; }
  .ibsline { fill: none; stroke: #000; stroke-width: 2.400; stroke-linejoin: round; }
  .fr { stroke: #2c4f4f; fill: none; }
  .lab { font: 11px "Roboto", sans-serif; fill: #32535a; }
  .pre { white-space: pre; }
  .ti { font: bold 8px "Liberation Sans", sans-serif; fill: #333; }
  .ta { font: bold 15px "Liberation Sans", sans-serif; fill: #555; }
  .t2 { font-size: 13px; }

  .dialog { position: absolute; left: 0; top: 352px; width: 269px; height: 211px; background: #efefef; box-shadow: 2px 2px 4px rgba(0,0,0,.35); display: flex; flex-direction: column; line-height: normal; overflow: hidden; color: #111; }
  .dhead { height: 30px; background: #fff; display: flex; align-items: center; justify-content: flex-end; gap: 33px; padding-right: 17px; flex: none; }
  .q { color: #999; font-size: 16px; }
  .dmsg { height: 67px; position: relative; white-space: nowrap; flex: none; padding-top: 15px; box-sizing: border-box; }
  .dmsg .nt { margin-left: -1px; }
  .mscroll { position: absolute; left: 244px; top: 16px; height: 43px; width: 17px; border-left: 1px solid #d8d8d8; display: flex; flex-direction: column; justify-content: space-between; padding: 5px 0 4px 2px; box-sizing: border-box; }
  .nt { display: inline-block; transform: scaleX(.85); transform-origin: left; white-space: nowrap; }
  .dlist { width: 260px; height: 74px; border: 1px solid #8a8a8a; border-left: none; box-sizing: border-box; display: flex; background: #fff; flex: none; overflow: hidden; }
  .rows { width: 242px; padding-top: 1px; }
  .row { height: 20px; line-height: 19px; border-bottom: 1px solid #d8d8d8; background: #fff; white-space: nowrap; overflow: hidden; box-sizing: border-box; }
  .alt { background: #e8e8e8; }
  .lscroll { width: 17px; background: #f4f4f4; display: flex; flex-direction: column; align-items: center; justify-content: space-between; padding: 6px 0 5px; box-sizing: border-box; }
  .thumb { width: 15px; height: 17px; background: #cdcdcd; margin-bottom: 24px; margin-top: -1px; }
  .ok { width: 73px; height: 21px; margin: 10px 0 0 45px; background: #e1e1e1; border: 1px solid #adadad; font: inherit; color: #111; padding: 0; }

  .tabs { height: 21px; border-top: 2px solid #000; background: #f0f0f0; display: flex; padding-left: 2px; position: relative; box-shadow: inset 1px 0 0 #888; flex: none; }
  .tab { height: 20px; line-height: 19px; display: flex; justify-content: center; box-sizing: border-box; border-right: 1px solid #8a8a8a; color: #6a6a6a; flex: none; padding-left: 2px; }
  .tt { display: inline-block; transform: scaleX(.87); white-space: nowrap; font-size: 12.500px; }
  .active { background: #fff; color: #000; border: 1px solid #000; border-top: none; border-bottom-width: 2px; padding-left: 0; }
  .tabarrows { position: absolute; left: 1331px; top: 4px; }

  .status { height: 22px; display: flex; align-items: center; background: #f0f0f0; flex: none; color: #111; }
  .cell { height: 19px; line-height: 18px; box-sizing: border-box; border-right: 1px solid #c8c8c8; padding-left: 5px; flex: none; overflow: hidden; }
  .cell:first-child { padding-left: 2px; }
  .st { display: inline-block; transform: scaleX(.89); transform-origin: left; white-space: nowrap; font-size: 12.500px; }
  .stbars { margin-left: 6px; flex: none; }
  .mem { margin-left: 3px; }
</style>
